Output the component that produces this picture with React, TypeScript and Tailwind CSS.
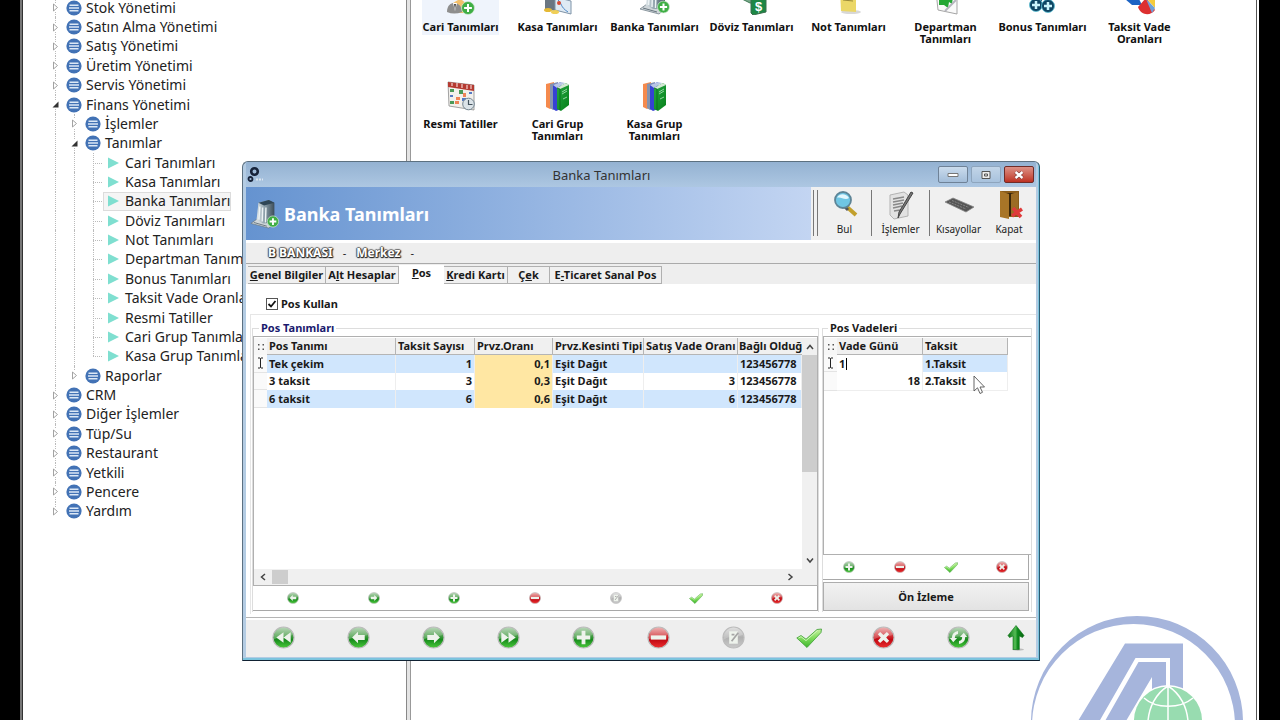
import React from "react";

type TreeNode = { label: string; level: 0 | 1 | 2; open?: boolean; selected?: boolean; last?: boolean };

const tree: TreeNode[] = [
  { label: "Stok Yönetimi", level: 0 },
  { label: "Satın Alma Yönetimi", level: 0 },
  { label: "Satış Yönetimi", level: 0 },
  { label: "Üretim Yönetimi", level: 0 },
  { label: "Servis Yönetimi", level: 0 },
  { label: "Finans Yönetimi", level: 0, open: true },
  { label: "İşlemler", level: 1 },
  { label: "Tanımlar", level: 1, open: true },
  { label: "Cari Tanımları", level: 2 },
  { label: "Kasa Tanımları", level: 2 },
  { label: "Banka Tanımları", level: 2, selected: true },
  { label: "Döviz Tanımları", level: 2 },
  { label: "Not Tanımları", level: 2 },
  { label: "Departman Tanımları", level: 2 },
  { label: "Bonus Tanımları", level: 2 },
  { label: "Taksit Vade Oranları", level: 2 },
  { label: "Resmi Tatiller", level: 2 },
  { label: "Cari Grup Tanımları", level: 2 },
  { label: "Kasa Grup Tanımları", level: 2, last: true },
  { label: "Raporlar", level: 1, last: true },
  { label: "CRM", level: 0 },
  { label: "Diğer İşlemler", level: 0 },
  { label: "Tüp/Su", level: 0 },
  { label: "Restaurant", level: 0 },
  { label: "Yetkili", level: 0 },
  { label: "Pencere", level: 0 },
  { label: "Yardım", level: 0, last: true },
];

function Gradients() {
  return (
    <svg className="absolute size-0" aria-hidden="true">
      <defs>
        <linearGradient id="ballGreen" x1="0" y1="0" x2="0" y2="1">
          <stop offset="0" stopColor="#a9cda9" />
          <stop offset="0.4" stopColor="#4da04c" />
          <stop offset="0.6" stopColor="#178a1c" />
          <stop offset="1" stopColor="#4ccb3c" />
        </linearGradient>
        <linearGradient id="ballRed" x1="0" y1="0" x2="0" y2="1">
          <stop offset="0" stopColor="#e9a3a3" />
          <stop offset="0.45" stopColor="#cf2a2f" />
          <stop offset="0.6" stopColor="#c00812" />
          <stop offset="1" stopColor="#ee3030" />
        </linearGradient>
        <linearGradient id="ballGray" x1="0" y1="0" x2="0" y2="1">
          <stop offset="0" stopColor="#d8d8d8" />
          <stop offset="0.5" stopColor="#b0b0b0" />
          <stop offset="1" stopColor="#cacaca" />
        </linearGradient>
        <linearGradient id="checkGreen" x1="0" y1="0" x2="0" y2="1">
          <stop offset="0" stopColor="#c5f09f" />
          <stop offset="0.5" stopColor="#7fdc5c" />
          <stop offset="1" stopColor="#3fb52c" />
        </linearGradient>
        <linearGradient id="steel" x1="0" y1="0" x2="1" y2="0">
          <stop offset="0" stopColor="#dfe7ea" />
          <stop offset="0.5" stopColor="#8498a3" />
          <stop offset="1" stopColor="#3c4c58" />
        </linearGradient>
        <linearGradient id="bookGreen" x1="0" y1="0" x2="1" y2="1">
          <stop offset="0" stopColor="#25a845" />
          <stop offset="1" stopColor="#078019" />
        </linearGradient>
        <linearGradient id="upArrow" x1="0" y1="0" x2="1" y2="0">
          <stop offset="0" stopColor="#0b7415" />
          <stop offset="0.45" stopColor="#55bb55" />
          <stop offset="0.6" stopColor="#0f8a1d" />
          <stop offset="1" stopColor="#066410" />
        </linearGradient>
      </defs>
    </svg>
  );
}

type Kind = "first" | "prev" | "next" | "last" | "add" | "remove" | "edit" | "check" | "cancel" | "refresh" | "up";

function ActionIcon({ kind, className }: { kind: Kind; className: string }) {
  if (kind === "check") {
    return (
      <svg viewBox="0 0 26 24" className={className} aria-hidden="true">
        <path d="M0.800 12 5 9.500 10 13.200 21 3.500 25.500 3 25 6.500 11 21.500Z" fill="url(#checkGreen)" stroke="#3c9d33" strokeWidth="0.800" strokeLinejoin="round" />
        <path d="M2.500 12 5 10.700 10 14.600 21.500 4.500" fill="none" stroke="#d8f7c4" strokeWidth="0.900" />
      </svg>
    );
  }
  if (kind === "up") {
    return (
      <svg viewBox="0 0 18 26" className={className} aria-hidden="true">
        <ellipse cx="11" cy="24.500" rx="6" ry="1.200" fill="#bbb" />
        <path d="M9 0.500 17 10.500 15.500 12.500 12.300 11V24.500H6V11L2.500 12.500 1 10.500Z" fill="url(#upArrow)" stroke="#0a7014" strokeWidth="0.600" />
      </svg>
    );
  }
  const fill =
    kind === "remove" || kind === "cancel" ? "url(#ballRed)" : kind === "edit" ? "url(#ballGray)" : "url(#ballGreen)";
  return (
    <svg viewBox="0 0 24 24" className={className} aria-hidden="true">
      <circle cx="12" cy="12" r="11" fill={fill} stroke="#bcbcbc" strokeWidth="1.200" />
      <path d="M2 10A10.300 10.300 0 0 1 22 9C16 12 10 9 2 14Z" fill="#fff" opacity="0.220" />
      <g fill="#eef3ec">
        {kind === "first" && <path d="M12 6.500V17.500L4.500 12ZM19.500 6.500V17.500L12 12Z" />}
        {kind === "last" && <path d="M12 6.500V17.500L19.500 12ZM4.500 6.500V17.500L12 12Z" />}
        {kind === "prev" && <path d="M11.500 6 5.300 12 11.500 18V14.500H18.500V9.500H11.500Z" />}
        {kind === "next" && <path d="M12.500 6 18.700 12 12.500 18V14.500H5.500V9.500H12.500Z" />}
        {kind === "add" && <path d="M10 5h4v5h5v4h-5v5h-4v-5H5v-4h5Z" />}
        {kind === "remove" && <path d="M4 9.800h16v4.400H4Z" />}
        {kind === "cancel" && <path d="M8.500 6.200 12 9.300l3.500-3.100 2.400 2.400L14.800 12l3.100 3.400-2.400 2.400L12 14.700l-3.500 3.100L6.100 15.400 9.200 12 6.100 8.600Z" />}
        {kind === "edit" && (
          <>
            <path d="M7.500 5.500h9v13h-9Z" />
            <path d="M10 16 17 7M10 9h3" stroke="#a5a5a5" strokeWidth="1.800" />
          </>
        )}
      </g>
      {kind === "refresh" && (
        <g fill="#eef3ec">
          <path d="M5 12.500A7 7 0 0 1 11.500 5.200V8.300A4 4 0 0 0 8.200 12.500H10.500L6.500 17 3 12.500Z" />
          <path d="M19 11.500A7 7 0 0 1 12.500 18.800V15.700A4 4 0 0 0 15.800 11.500H13.500L17.500 7 21 11.500Z" />
        </g>
      )}
    </svg>
  );
}

function PlusBadge({ x, y, r }: { x: number; y: number; r: number }) {
  return (
    <g transform={`translate(${x} ${y})`}>
      <circle r={r} fill="#3fae45" stroke="#d8ecd8" strokeWidth="0.700" />
      <path d={`M0 ${-r * 0.6}V${r * 0.6}M${-r * 0.6} 0H${r * 0.6}`} stroke="#fff" strokeWidth="2" />
    </g>
  );
}

function BankIcon({ className }: { className: string }) {
  return (
    <svg viewBox="0 0 32 32" className={className} aria-hidden="true">
      <path d="M1 26 8 21 27 25 20 31Z" fill="#cfd6da" stroke="#66757f" strokeWidth="0.700" />
      <path d="M9 4 20 1 26 4V25L14 26 7 22Z" fill="url(#steel)" />
      <path d="M9 4 20 1 26 4 15 7Z" fill="#2f4656" />
      <path d="M10.500 8 9.500 22M13.500 9 13 24M17 9 16.500 25" stroke="#edf3f5" strokeWidth="1.500" />
      <path d="M4 25 18 29" stroke="#67757e" strokeWidth="1" />
      <PlusBadge x={24.5} y={24} r={6} />
    </svg>
  );
}

function Books({ className }: { className: string }) {
  return (
    <svg viewBox="0 0 32 32" className={className} aria-hidden="true">
      <path d="M4 4 12 2V27L8 29 4 27Z" fill="#f58a4d" />
      <path d="M8 4 16 2V28L11 30 8 28Z" fill="#8493ae" />
      <path d="M11 5 19 2V29L14 31 11 29Z" fill="#3642d4" />
      <path d="M15 8 24 3 27 5V25L19 31 15 29Z" fill="url(#bookGreen)" />
      <path d="M11 5 19 2 23 3 15 8Z" fill="#b9c6e4" />
      <path d="M15 8 24 3 27 5 18 9Z" fill="#d4e8d4" />
      <path d="M20 12 25 9M20 14 25 11M21 19 25 17" stroke="#9fdfae" strokeWidth="0.900" />
      <path d="M15 8 18 9V30" fill="none" stroke="#066316" strokeWidth="0.700" />
    </svg>
  );
}

function LauncherIcon({ name }: { name: string }) {
  const c = "size-8 shrink-0";
  if (name === "books") return <Books className={c} />;
  if (name === "bank") return <BankIcon className={c} />;
  return (
    <svg viewBox="0 0 32 32" className={c} aria-hidden="true">
      {name === "cari" && (
        <>
          <circle cx="16" cy="12" r="5" fill="#f4b183" />
          <path d="M9 20 14 17 18 17 23 21V30H9Z" fill="#f3c06c" />
          <path d="M3 29C3 22 7 20 10 20S18 22 18 29Q10 32 3 29Z" fill="#8e8e8e" />
          <path d="M9 20 11 28 13 20Z" fill="#fff" />
          <path d="M10 21 11 27 12 21Z" fill="#444" />
          <PlusBadge x={24} y={25} r={6.5} />
        </>
      )}
      {name === "kasa" && (
        <>
          <path d="M4 12 14 8V28L4 26Z" fill="#6a7682" />
          <path d="M14 14 30 18V31L14 27Z" fill="#dfeaf3" stroke="#7f94a8" />
          <path d="M17 17C21 20 19 24 27 29" fill="none" stroke="#4c86c6" />
          <circle cx="18" cy="20" r="2" fill="#d94a34" />
          <ellipse cx="7" cy="27" rx="4" ry="2" fill="#e5b935" />
          <ellipse cx="14" cy="29" rx="4" ry="2" fill="#f0cf57" />
        </>
      )}
      {name === "doviz" && (
        <>
          <path d="M3 14 20 10 28 20 15 20Z" fill="#77a889" stroke="#3f7954" />
          <path d="M16 13 31 15V29L18 32 16 30Z" fill="#1d8745" stroke="#3b6e4d" />
          <text x="20" y="28" fontSize="13" fontWeight="700" fill="#fff" fontFamily="Liberation Sans, sans-serif">$</text>
        </>
      )}
      {name === "not" && (
        <>
          <ellipse cx="18" cy="29" rx="10" ry="2" fill="#d8d8d8" />
          <path d="M7 6 23 8V29L8 28Z" fill="#ebd767" />
          <path d="M10 14 20 15M10 17 20 18" stroke="#99893a" />
        </>
      )}
      {name === "dep" && (
        <>
          <path d="M6 8 27 12V31L8 27Z" fill="#fafafa" stroke="#a5a5a5" />
          <path d="M9 12 23 14 22 21 19 19 18 25 14 22 9 22Z" fill="#25a735" />
          <path d="M15 28 26 17" stroke="#b5b5bd" strokeWidth="2" />
        </>
      )}
      {name === "bonus" && (
        <>
          <circle cx="11" cy="14" r="6" fill="#124a68" />
          <circle cx="10" cy="22" r="6.500" fill="#0e4563" stroke="#5ac0d6" strokeWidth="0.800" />
          <circle cx="22" cy="23" r="6.500" fill="#0e4563" stroke="#5ac0d6" strokeWidth="0.800" />
          <path d="M10 18v8M6 22h8M22 19v8M18 23h8" stroke="#c9f4fb" strokeWidth="2.500" />
        </>
      )}
      {name === "taksit" && (
        <>
          <path d="M1 16 13 12 18 22 8 22Z" fill="#1c63c4" />
          <path d="M14 24 22 15 31 27C27 33 17 33 14 24Z" fill="#dd3030" />
          <path d="M22 15 31 14V25Z" fill="#f5cb3d" />
          <path d="M22 16 31 25 28 30Z" fill="#6fa0d8" />
        </>
      )}
      {name === "calendar" && (
        <>
          <path d="M3 2 29 5V30L4 26Z" fill="#f2f0ec" stroke="#8c8c8c" strokeWidth="0.800" />
          <path d="M3 2 29 5V11L3 7Z" fill="#b53a31" />
          <path d="M7 3v3M12 3v4M17 4v4M22 5v4M26 5v4" stroke="#f5d3cf" strokeWidth="1.200" />
          <path d="M5 9h4v3H5ZM5 21h4v3H5ZM14 10h4v4h-4Z" fill="#4a9a58" />
          <path d="M11 17h4v3h-4ZM10 21h4v3h-4ZM18 13h3v4h-3Z" fill="#ef8457" />
          <path d="M17 18h4v3h-4ZM24 12h3v2h-3ZM5 15h3v2H5Z" fill="#5479c4" />
          <circle cx="23.500" cy="24" r="5.800" fill="#dbe3e8" stroke="#748591" />
          <path d="M23.500 20v4.500h4" fill="none" stroke="#43525c" strokeWidth="1.200" />
        </>
      )}
    </svg>
  );
}

const launchers = [
  { label: "Cari Tanımları", icon: "cari" },
  { label: "Kasa Tanımları", icon: "kasa" },
  { label: "Banka Tanımları", icon: "bank" },
  { label: "Döviz Tanımları", icon: "doviz" },
  { label: "Not Tanımları", icon: "not" },
  { label: "Departman Tanımları", icon: "dep" },
  { label: "Bonus Tanımları", icon: "bonus" },
  { label: "Taksit Vade Oranları", icon: "taksit" },
  { label: "Resmi Tatiller", icon: "calendar" },
  { label: "Cari Grup Tanımları", icon: "books" },
  { label: "Kasa Grup Tanımları", icon: "books" },
];

function Expander({ open }: { open?: boolean }) {
  return (
    <svg viewBox="0 0 9 9" className="relative size-[9px] bg-white" aria-hidden="true">
      {open ? <path d="M7.500 1.500V7.500H1.500Z" fill="#333" /> : <path d="M2.500 1 6.500 4.500 2.500 8Z" fill="#fff" stroke="#999" strokeWidth="0.900" />}
    </svg>
  );
}

function Guide({ half, children }: { half?: boolean; children?: React.ReactNode }) {
  return (
    <span className="relative flex w-[19px] shrink-0 items-center justify-center self-stretch">
      <span className={`absolute left-[9px] top-0 border-l border-dotted border-[#bbb] ${half ? "h-1/2" : "h-full"}`} />
      {children}
    </span>
  );
}

function TreeRow({ node }: { node: TreeNode }) {
  if (node.level === 2) {
    return (
      <li className="flex items-center">
        <Guide />
        <Guide />
        <Guide half={node.last}>
          <span className="absolute left-[9px] top-1/2 w-[9px] border-t border-dotted border-[#bbb]" />
        </Guide>
        <a
          href="#tanim"
          className={`flex h-full items-center gap-[6px] whitespace-nowrap border pl-1 ${node.selected ? "border-[#dcdcdc] bg-[#f5f5f5]" : "border-transparent"}`}
        >
          <svg viewBox="0 0 11 12" className="h-3 w-[11px]" aria-hidden="true">
            <path d="M0 0.500 11 6 0 11.500Z" fill="#7fdfd0" />
          </svg>
          {node.label}
        </a>
      </li>
    );
  }
  return (
    <li className="flex items-center">
      {node.level === 1 && <Guide />}
      <Guide half={node.last}>
        <Expander open={node.open} />
      </Guide>
      <a href="#menu" className="flex items-center gap-1 whitespace-nowrap pl-px">
        <svg viewBox="0 0 16 16" className="size-4" aria-hidden="true">
          <circle cx="8" cy="8" r="7.600" fill="#4272b5" />
          <path d="M3.500 5.200h9M3 8h10M3.500 10.800h9" stroke="#dce8f6" strokeWidth="1.600" />
        </svg>
        {node.label}
      </a>
    </li>
  );
}

function IconBar({ kinds }: { kinds: Kind[] }) {
  return (
    <div className="flex h-[25px] border-b border-r border-[#a8a8a8] bg-white">
      {kinds.map((k) => (
        <button key={k} type="button" aria-label={k} className="flex flex-1 items-center justify-center">
          <ActionIcon kind={k} className={k === "check" ? "h-[13px] w-[14px]" : "size-3"} />
        </button>
      ))}
    </div>
  );
}

function Chevron({ dir }: { dir: "up" | "down" | "left" | "right" }) {
  const paths = { up: "M1 6 4 2.500 7 6", down: "M1 2.500 4 6 7 2.500", left: "M6 1 2.500 4 6 7", right: "M2.500 1 6 4 2.500 7" };
  return (
    <svg viewBox="0 0 8 8" className="size-2" aria-hidden="true">
      <path d={paths[dir]} fill="none" stroke="#444" strokeWidth="1.500" />
    </svg>
  );
}

function IBeam() {
  return (
    <svg viewBox="0 0 7 12" className="mx-auto h-3 w-[7px]" aria-hidden="true">
      <path d="M1 1h2l.5.5L4 1h2M3.500 1.500v9M1 11h2l.5-.5L4 11h2" fill="none" stroke="#222" />
    </svg>
  );
}

function GripDots() {
  return (
    <svg viewBox="0 0 8 8" className="mx-auto size-2" aria-hidden="true">
      <path d="M1 1h1.500v1.500H1ZM5.500 1H7v1.500H5.500ZM1 5.500h1.500V7H1ZM5.500 5.500H7V7H5.500Z" fill="#555" />
    </svg>
  );
}

const th = "border-b border-r border-[#b5b5b5] bg-[#f0f0f0] p-0 pl-[2px] text-left font-bold whitespace-nowrap overflow-hidden";
const td = "border-r border-[#eee] p-0 px-[2px] whitespace-nowrap overflow-hidden";

const posRows = [
  { name: "Tek çekim", n: "1", rate: "0,1", vade: "", active: true },
  { name: "3 taksit", n: "3", rate: "0,3", vade: "3", active: false },
  { name: "6 taksit", n: "6", rate: "0,6", vade: "6", active: false },
];

function PosTable() {
  return (
    <table className="h-[70px] w-full table-fixed border-separate border-spacing-0">
      <colgroup>
        <col className="w-[13px]" />
        <col className="w-[129px]" />
        <col className="w-[79px]" />
        <col className="w-[78px]" />
        <col className="w-[91px]" />
        <col className="w-[94px]" />
        <col />
      </colgroup>
      <thead>
        <tr>
          <th className="bg-[#f7f7f7] p-0" aria-label="Seçim"><GripDots /></th>
          <th className={th}>Pos Tanımı</th>
          <th className={th}>Taksit Sayısı</th>
          <th className={th}>Prvz.Oranı</th>
          <th className={th}>Prvz.Kesinti Tipi</th>
          <th className={th}>Satış Vade Oranı</th>
          <th className="whitespace-nowrap border-b border-[#b5b5b5] bg-[#f0f0f0] p-0 pl-px text-left font-bold">Bağlı Olduğ</th>
        </tr>
      </thead>
      <tbody>
        {posRows.map((r) => (
          <tr key={r.name} className="odd:bg-[#d0e6fd] even:bg-white">
            <td className="border-b border-[#e4e4e4] bg-[#fafafa] p-0">{r.active && <IBeam />}</td>
            <td className={td}>{r.name}</td>
            <td className={`${td} text-right`}>{r.n}</td>
            <td className={`${td} bg-[#ffe7a3] text-right`}>{r.rate}</td>
            <td className={td}>Eşit Dağıt</td>
            <td className={`${td} text-right`}>{r.vade}</td>
            <td className={td}>123456778</td>
          </tr>
        ))}
      </tbody>
    </table>
  );
}

function VadeTable() {
  return (
    <table className="h-[53px] w-[184px] table-fixed border-separate border-spacing-0">
      <colgroup>
        <col className="w-[13px]" />
        <col className="w-[86px]" />
        <col className="w-[85px]" />
      </colgroup>
      <thead>
        <tr>
          <th className="bg-[#f7f7f7] p-0" aria-label="Seçim"><GripDots /></th>
          <th className={th}>Vade Günü</th>
          <th className={th}>Taksit</th>
        </tr>
      </thead>
      <tbody>
        <tr>
          <td className="border-b border-[#e4e4e4] bg-[#fafafa] p-0"><IBeam /></td>
          <td className={td}>
            <span className="flex items-center">
              <input aria-label="Vade Günü" defaultValue="1" className="h-4 w-[7px] bg-transparent p-0 outline-none" />
              <span className="h-3 border-l border-black" />
            </span>
          </td>
          <td className={`${td} bg-[#d0e6fd]`}>1.Taksit</td>
        </tr>
        <tr>
          <td className="border-b border-[#e4e4e4] bg-[#fafafa] p-0" />
          <td className={`${td} border-b text-right`}>18</td>
          <td className={`${td} border-b`}>2.Taksit</td>
        </tr>
      </tbody>
    </table>
  );
}

const tabs: { pre: string; key: string; post: string; cls: string; active?: boolean }[] = [
  { pre: "", key: "G", post: "enel Bilgiler", cls: "w-[78px]" },
  { pre: "A", key: "l", post: "t Hesaplar", cls: "w-[73px]" },
  { pre: "", key: "P", post: "os", cls: "w-[45px]", active: true },
  { pre: "", key: "K", post: "redi Kartı", cls: "w-[64px]" },
  { pre: "Ç", key: "e", post: "k", cls: "w-[42px]" },
  { pre: "E", key: "-", post: "Ticaret Sanal Pos", cls: "w-[112px]" },
];

const toolButton = "flex h-full flex-col items-center justify-between text-[10px] leading-3 font-normal";

function HeaderTools() {
  return (
    <div className="flex h-full items-center bg-[#f0f0f0] pb-[5px] pl-[2px] pr-[5px] pt-[3px] text-[#222]">
      <span className="h-[46px] w-[5px] border-x border-[#777]" />
      <button type="button" className={`${toolButton} w-[53px]`}>
        <svg viewBox="0 0 30 30" className="size-[30px]" aria-hidden="true">
          <path d="M17 17 26 25" stroke="#c2a02d" strokeWidth="4" />
          <path d="M15 17 18 20" stroke="#555" strokeWidth="3" />
          <circle cx="13" cy="10" r="8" fill="#6fc6e4" stroke="#5d8496" strokeWidth="1.800" />
          <path d="M7 8C9 3 16 3 19 8 15 11 10 6 7 8Z" fill="#e3f7fd" />
        </svg>
        Bul
      </button>
      <span className="h-[46px] border-l border-[#777]" />
      <button type="button" className={`${toolButton} w-[57px]`}>
        <svg viewBox="0 0 30 30" className="size-[30px]" aria-hidden="true">
          <path d="M4 5 18 2 22 5V26L8 29 4 25Z" fill="#e2e2e2" stroke="#b3b3b3" />
          <path d="M7 9 18 7M7 12 18 10M7 15 17 13M7 18 16 16M8 21 14 20" stroke="#888" strokeWidth="1.500" />
          <path d="M27 3 14 24 12 28 13 22 25 2Z" fill="#777" stroke="#444" />
        </svg>
        İşlemler
      </button>
      <span className="h-[46px] border-l border-[#777]" />
      <button type="button" className={`${toolButton} w-[57px]`}>
        <svg viewBox="0 0 30 30" className="size-[30px]" aria-hidden="true">
          <path d="M1 12 9 8 30 17 22 22Z" fill="#555" stroke="#888" strokeWidth="0.800" />
          <path d="M5 12 22 19M8 10.500 25 17.500" stroke="#999" strokeWidth="0.700" strokeDasharray="2 1" />
        </svg>
        Kısayollar
      </button>
      <button type="button" className={`${toolButton} w-[44px]`}>
        <svg viewBox="0 0 30 30" className="size-[30px]" aria-hidden="true">
          <path d="M6 1H25V27H6Z" fill="#8a5c1a" />
          <path d="M9 3H22V26H9Z" fill="#3b2709" />
          <path d="M6 1 15 4V29L6 27Z" fill="#a87527" />
          <path d="M17 4 24 2V24L17 27Z" fill="#9c6c24" />
          <path d="M19 18 27 27M28 19 18 26" stroke="#df3a3a" strokeWidth="3.500" />
        </svg>
        Kapat
      </button>
    </div>
  );
}

const navKinds: Kind[] = ["first", "prev", "next", "last", "add", "remove", "edit", "check", "cancel", "refresh"];
const infoName = "text-[12px] text-white [text-shadow:1px_0_1px_#333,-1px_0_1px_#555,0_1px_1px_#222,1px_1px_1px_#333,0_-1px_1px_#777]";

function BankDialog() {
  return (
    <section
      role="dialog"
      aria-label="Banka Tanımları"
      className="absolute left-[220px] top-[161px] flex h-[500px] w-[798px] flex-col rounded-t-md border border-[#5c7080] border-b-[#123] border-r-[#2b5a70] bg-[#b4cce3] px-[3px] pb-[3px] text-[11px] font-bold leading-4 text-[#1a1a1a] shadow-[inset_-1px_-2px_0_#7cc4de]"
    >
      <header className="grid h-[25px] shrink-0 grid-cols-[auto_1fr_auto] items-center bg-linear-to-b from-[#94b2d2] to-[#adc7e2] text-[13px] font-normal text-[#333]">
        <svg viewBox="0 0 18 18" className="ml-px size-[18px]" aria-hidden="true">
          <circle cx="7.500" cy="5.500" r="3.300" fill="none" stroke="#17233a" strokeWidth="2.600" />
          <circle cx="3.500" cy="13" r="2" fill="none" stroke="#17233a" strokeWidth="1.800" />
          <path d="M9 13.500h7" stroke="#dce6f0" strokeWidth="2" strokeDasharray="2 1" />
        </svg>
        <h1 className="text-center">Banka Tanımları</h1>
        <div className="flex gap-[3px] pr-[2px]">
          <button type="button" aria-label="Simge durumuna küçült" className="flex h-[17px] w-[30px] items-center justify-center rounded-xs border border-[#6f8297] bg-linear-to-b from-[#cbdced] to-[#a3bdd9]">
            <svg viewBox="0 0 12 6" className="h-[6px] w-3" aria-hidden="true"><path d="M1 1.500h10v3H1Z" fill="#fff" stroke="#777" /></svg>
          </button>
          <button type="button" aria-label="Ekranı kapla" className="flex h-[17px] w-[30px] items-center justify-center rounded-xs border border-[#8ea5bd] bg-linear-to-b from-[#c2d5e8] to-[#a8c2dd]">
            <svg viewBox="0 0 10 8" className="h-2 w-[10px]" aria-hidden="true"><path d="M1 .5h8v7H1ZM3.500 3h3v2h-3Z" fill="#eee" stroke="#555" /></svg>
          </button>
          <button type="button" aria-label="Pencereyi kapat" className="flex h-[17px] w-[30px] items-center justify-center rounded-xs border border-[#702c28] bg-linear-to-b from-[#dc9086] to-[#bd2f21]">
            <svg viewBox="0 0 12 10" className="h-[10px] w-3" aria-hidden="true"><path d="M2.500 2 9.500 8M9.500 2 2.500 8" stroke="#6b2a2a" strokeWidth="3.600" /><path d="M2.500 2 9.500 8M9.500 2 2.500 8" stroke="#fff" strokeWidth="2.400" /></svg>
          </button>
        </div>
      </header>

      <div className="flex h-[56px] shrink-0 border-b-[3px] border-white bg-[#f0f0f0]">
        <div className="flex min-w-0 flex-1 items-center gap-1 bg-linear-to-r from-[#6593d0] to-[#c3d5f2] pl-1">
          <BankIcon className="size-[30px]" />
          <h2 className="text-[18px] leading-6 text-white">Banka Tanımları</h2>
        </div>
        <HeaderTools />
      </div>

      <div className="flex h-[21px] shrink-0 items-center gap-[10px] border-b border-[#aaa] bg-[#eee] pl-[22px]">
        <span className={infoName}>B BANKASI</span>
        <span className="font-normal">-</span>
        <span className={infoName}>Merkez</span>
        <span className="font-normal">-</span>
      </div>

      <div role="tablist" className="flex h-5 shrink-0 items-end bg-[#eee] pl-[2px]">
        {tabs.map((t) => (
          <button
            key={t.post}
            type="button"
            role="tab"
            aria-selected={!!t.active}
            className={`${t.cls} overflow-hidden whitespace-nowrap ${t.active ? "h-[19px] bg-white pb-1" : "h-[18px] border border-l-0 border-[#b0b0b0] bg-[#f0f0f0]"}`}
          >
            {t.pre}
            <span className="underline">{t.key}</span>
            {t.post}
          </button>
        ))}
      </div>

      <div className="flex min-h-0 flex-1 flex-col border-b border-[#b5b5b5] bg-white pb-[3px]">
        <div className="flex h-[30px] shrink-0 items-center pl-5 pt-[10px]">
          <label className="flex items-center gap-[3px]">
            <span className="grid place-items-center">
              <input type="checkbox" defaultChecked className="col-start-1 row-start-1 size-3 appearance-none border border-[#555] bg-white" />
              <svg viewBox="0 0 12 12" className="pointer-events-none col-start-1 row-start-1 size-3" aria-hidden="true">
                <path d="M2.500 6 5 8.500 9.500 3" fill="none" stroke="#111" strokeWidth="1.800" />
              </svg>
            </span>
            Pos Kullan
          </label>
        </div>
        <div className="ml-1 flex min-h-0 flex-1 gap-[3px] border-l border-t border-[#e6e6e6] pb-[2px] pl-px pr-1 pt-[5px]">
          <fieldset className="flex min-w-0 flex-1 flex-col border border-b-0 border-[#ddd]">
            <legend className="ml-[6px] px-[2px] text-[#1a1a6e]">Pos Tanımları</legend>
            <div className="flex h-[250px] flex-col border border-[#b0b0b0] pt-px">
              <div className="flex min-h-0 flex-1">
                <div className="min-w-0 flex-1">
                  <PosTable />
                </div>
                <div className="flex w-[15px] flex-col items-center bg-[#f0f0f0]">
                  <button type="button" aria-label="Yukarı" className="flex h-[17px] w-full shrink-0 items-center justify-center"><Chevron dir="up" /></button>
                  <span className="h-[117px] w-full bg-[#cdcdcd]" />
                  <span className="flex-1" />
                  <button type="button" aria-label="Aşağı" className="flex h-[18px] w-full shrink-0 items-center justify-center"><Chevron dir="down" /></button>
                </div>
              </div>
              <div className="flex h-4 shrink-0 items-center bg-[#f0f0f0] pr-[18px]">
                <button type="button" aria-label="Sola" className="flex h-full w-[18px] items-center justify-center"><Chevron dir="left" /></button>
                <span className="h-[14px] w-4 bg-[#cdcdcd]" />
                <span className="flex-1" />
                <button type="button" aria-label="Sağa" className="flex h-full w-[18px] items-center justify-center"><Chevron dir="right" /></button>
              </div>
            </div>
            <IconBar kinds={["prev", "next", "add", "remove", "edit", "check", "cancel"]} />
          </fieldset>
          <fieldset className="flex w-[210px] flex-col border border-b-0 border-[#ddd]">
            <legend className="ml-[5px] px-[2px]">Pos Vadeleri</legend>
            <div className="h-[219px] border border-r-0 border-[#b0b0b0] pt-px">
              <VadeTable />
            </div>
            <div className="mr-[2px]">
              <IconBar kinds={["add", "remove", "check", "cancel"]} />
            </div>
            <button type="button" className="mr-[2px] mt-[2px] h-[29px] border border-[#adadad] bg-linear-to-b from-[#f2f2f2] to-[#e3e3e3]">
              Ön İzleme
            </button>
          </fieldset>
        </div>
      </div>

      <footer className="flex h-[39px] shrink-0 items-center border-t-2 border-white bg-[#eee] pb-[2px]">
        {navKinds.map((k) => (
          <button key={k} type="button" aria-label={k} className="flex flex-1 justify-center">
            <ActionIcon kind={k} className={k === "check" ? "h-6 w-[26px]" : "size-[23px]"} />
          </button>
        ))}
        <button type="button" aria-label="Yukarı git" className="flex w-10 justify-center">
          <ActionIcon kind="up" className="h-[26px] w-[18px]" />
        </button>
      </footer>

      <svg viewBox="0 0 12 20" className="pointer-events-none absolute left-[730px] top-[213px] h-5 w-3" aria-hidden="true">
        <path d="M1 1V16L4.500 12.800 7 18.500 9.500 17.300 7 12H11.500Z" fill="#fff" stroke="#555" strokeWidth="0.900" />
      </svg>
    </section>
  );
}

function CompanyLogo() {
  return (
    <svg viewBox="1030 610 222 110" className="pointer-events-none absolute bottom-0 right-[7px] h-[110px] w-[222px]" aria-hidden="true">
      <path
        fillRule="evenodd"
        fill="#a6b5dc"
        d="M1031 722a106 106 0 1 1 212 0a106 106 0 1 1 -212 0ZM1032 726a101.500 102 0 1 0 203 0a101.500 102 0 1 0 -203 0Z"
      />
      <path d="M1078 721 1125 643.500H1183V688.500H1170V658H1135.500L1099.500 721Z" fill="#a6b5dc" />
      <path d="M1105 721 1138.500 662H1166V690H1152V677L1126 721Z" fill="#a6b5dc" />
      <circle cx="1168" cy="720.500" r="35.500" fill="#fff" />
      <circle cx="1168" cy="720.500" r="34" fill="#98dcb0" />
      <path
        d="M1168 686V721M1168 686C1155 694 1149 708 1148 721M1168 686C1181 694 1187 708 1188 721M1144 698C1156 709 1180 709 1193 698"
        fill="none"
        stroke="#fff"
        strokeWidth="1.500"
      />
    </svg>
  );
}

export default function App() {
  return (
    <div className="h-screen overflow-hidden bg-black pl-[20px] pr-[21px] font-['Noto_Sans',sans-serif]">
      <Gradients />
      <main className="relative flex h-full overflow-hidden border-l-2 border-[#777] bg-white">
        <nav aria-label="Menü" className="w-[385px] shrink-0 overflow-hidden border-l border-r border-[#888] border-l-[#333]">
          <ul className="-mt-[2px] ml-[23px] grid h-[523px] auto-rows-fr text-[14px] leading-4 text-[#222]">
            {tree.map((n) => (
              <TreeRow key={n.label} node={n} />
            ))}
          </ul>
        </nav>
        <div className="w-1 shrink-0 border-r border-[#999] bg-[#e4e4e4]" />
        <div className="mr-[2px] min-w-0 flex-1 border-r border-[#555]">
          <div className="-mt-6 grid auto-rows-[97px] grid-cols-[repeat(auto-fill,97px)] pl-px">
            {launchers.map((l, i) => (
              <div key={l.label} className="flex items-start justify-center">
                <a
                  href="#ac"
                  className={`flex flex-col items-center gap-[6px] pb-[2px] pt-[7px] text-center text-[11px] font-bold leading-3 text-[#111] ${i === 0 ? "bg-[#eff4fc]" : ""}`}
                >
                  <LauncherIcon name={l.icon} />
                  <span className={l.label.length > 15 ? "w-[76px]" : "whitespace-nowrap"}>{l.label}</span>
                </a>
              </div>
            ))}
          </div>
        </div>
        <CompanyLogo />
        <BankDialog />
      </main>
    </div>
  );
}
